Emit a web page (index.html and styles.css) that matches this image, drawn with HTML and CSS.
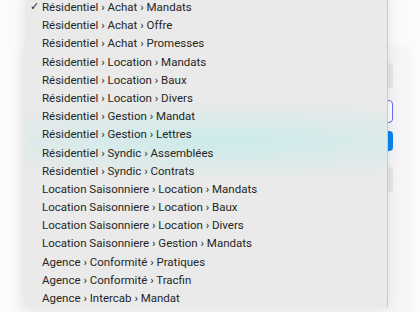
FILE: index.html
```html
<!DOCTYPE html>
<html lang="fr">
<head>
  <meta charset="UTF-8" />
  <meta name="viewport" content="width=device-width, initial-scale=1.0"/>
  <title>Classement</title>
  <link rel="stylesheet" href="styles.css">
</head>
<body>
  <div class="page">
    <div class="form-card">
      <div class="field field-plain"></div>
      <div class="field field-focus"></div>
      <div class="btn-primary"></div>
      <div class="field field-plain"></div>
    </div>
  </div>

  <ul class="select-menu">
    <li class="checked"><span class="check">✓</span>Résidentiel › Achat › Mandats</li>
    <li>Résidentiel › Achat › Offre</li>
    <li>Résidentiel › Achat › Promesses</li>
    <li>Résidentiel › Location › Mandats</li>
    <li>Résidentiel › Location › Baux</li>
    <li>Résidentiel › Location › Divers</li>
    <li>Résidentiel › Gestion › Mandat</li>
    <li>Résidentiel › Gestion › Lettres</li>
    <li>Résidentiel › Syndic › Assemblées</li>
    <li>Résidentiel › Syndic › Contrats</li>
    <li>Location Saisonniere › Location › Mandats</li>
    <li>Location Saisonniere › Location › Baux</li>
    <li>Location Saisonniere › Location › Divers</li>
    <li>Location Saisonniere › Gestion › Mandats</li>
    <li>Agence › Conformité › Pratiques</li>
    <li>Agence › Conformité › Tracfin</li>
    <li>Agence › Intercab › Mandat</li>
  </ul>
</body>
</html>
```

FILE: styles.css
```css
* {
  box-sizing: border-box;
}

body {
  margin: 0;
  height: 312px;
  overflow: hidden;
  font-family: Roboto, "Noto Sans", sans-serif;
  background: #fbfbfc;
  position: relative;
}

.page {
  padding: 48px 12px 0 20px;
}

.form-card {
  background: #f6f6f8;
  border-radius: 8px;
  box-shadow: 0 0 10px rgba(0, 0, 0, 0.05);
  padding: 15px 15px 40px 15px;
  height: 300px;
  display: flex;
  flex-direction: column;
}

.field {
  border-radius: 4px;
}

.field-plain {
  height: 25px;
  background: #e8e8ea;
}

.field-focus {
  height: 23px;
  margin-top: 12px;
  background: #fff;
  border: 1.5px solid #6b6bf5;
}

.btn-primary {
  height: 20px;
  margin-top: 8px;
  margin-bottom: 16px;
  background: #0b84f3;
  border-radius: 4px;
}

.select-menu {
  position: absolute;
  top: -7px;
  left: 25px;
  width: 363px;
  margin: 0;
  padding: 5px 0 0;
  list-style: none;
  background-color: #e9eae9;
  background-image: radial-gradient(ellipse 300px 40px at 200px 148px, rgba(202, 235, 235, 0.95), rgba(202, 235, 235, 0));
  border-right: 1.5px solid #c9caca;
  box-shadow: 0 0 14px rgba(0, 0, 0, 0.1);
}

.select-menu li {
  position: relative;
  height: 18.2px;
  line-height: 18.2px;
  padding-left: 17px;
  font-size: 11.5px;
  color: #262626;
  white-space: nowrap;
}

.check {
  position: absolute;
  left: 5px;
  font-size: 11px;
}
```
